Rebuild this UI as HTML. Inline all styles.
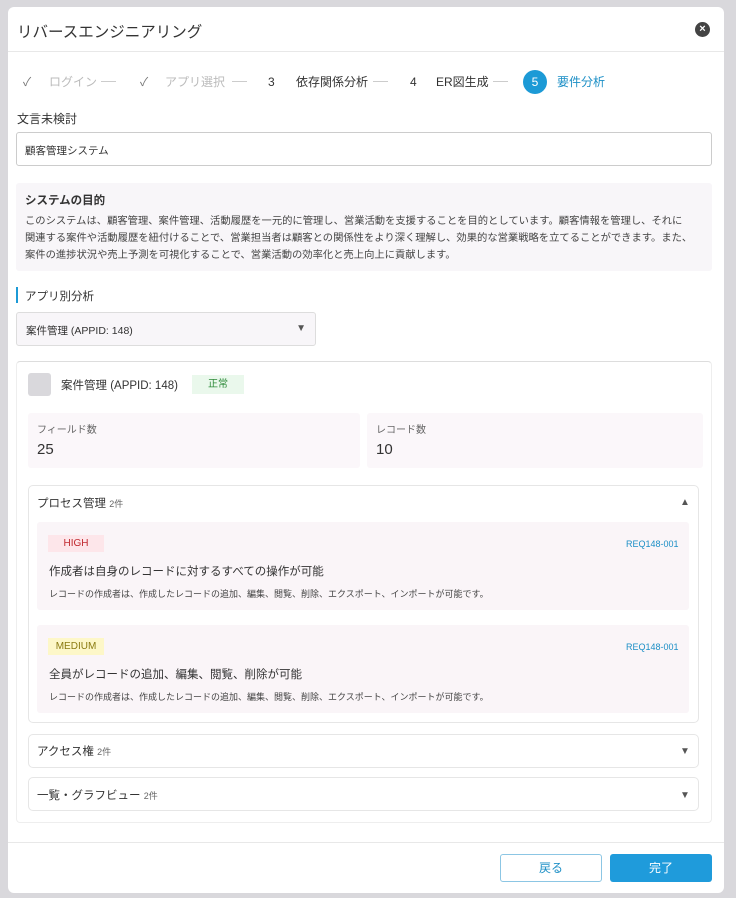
<!DOCTYPE html>
<html><head><meta charset="utf-8"><style>
*{box-sizing:border-box;margin:0;padding:0}
body{width:736px;height:898px;background:#d9d8dc;font-family:"Liberation Sans","Noto Sans CJK JP",sans-serif;color:#333;position:relative;overflow:hidden}
.a{position:absolute;white-space:nowrap}
.m{left:8px;top:7px;width:716px;height:886px;background:#fff;border-radius:6px}
.card{background:#fbf7fa;border-radius:3px}
.sec{border:1px solid #e6e6e6;border-radius:5px;background:#fff}
.tri{font-size:10px;color:#555}
.st{top:74px;font-size:12px;line-height:16px}
.ds{top:81px;width:15px;height:1px;background:#ccc}
</style></head><body>
<div class="a m"></div>
<div class="a" style="left:17px;top:20px;font-size:15.5px;color:#333">リバースエンジニアリング</div>
<div class="a" style="left:695px;top:22px;width:15px;height:15px;border-radius:50%;background:#444;color:#fff;font-size:11px;line-height:15px;text-align:center;font-weight:bold">×</div>
<div class="a" style="left:8px;top:51px;width:716px;height:1px;background:#e8e8e8"></div>
<div class="a st" style="left:23px;color:#777">✓</div>
<div class="a st" style="left:49px;color:#bbb">ログイン</div>
<div class="a ds" style="left:101px"></div>
<div class="a st" style="left:140px;color:#777">✓</div>
<div class="a st" style="left:165px;color:#bbb">アプリ選択</div>
<div class="a ds" style="left:232px"></div>
<div class="a st" style="left:268px">3</div>
<div class="a st" style="left:296px">依存関係分析</div>
<div class="a ds" style="left:373px"></div>
<div class="a st" style="left:410px">4</div>
<div class="a st" style="left:436px">ER図生成</div>
<div class="a ds" style="left:493px"></div>
<div class="a" style="left:523px;top:70px;width:24px;height:24px;border-radius:50%;background:#1c9ad6;color:#fff;font-size:12px;line-height:24px;text-align:center">5</div>
<div class="a st" style="left:557px;color:#1c8fc6">要件分析</div>
<div class="a" style="left:17px;top:110px;font-size:12px">文言未検討</div>
<div class="a" style="left:16px;top:132px;width:696px;height:34px;border:1px solid #ccc;border-radius:3px;font-size:10.5px;padding:10px 8px">顧客管理システム</div>
<div class="a card" style="left:16px;top:183px;width:696px;height:88px;background:#f8f6f9"></div>
<div class="a" style="left:25px;top:192px;font-size:11.5px;font-weight:bold">システムの目的</div>
<div class="a" style="left:25px;top:213px;width:680px;white-space:normal;font-size:10.3px;line-height:17px;color:#444">このシステムは、顧客管理、案件管理、活動履歴を一元的に管理し、営業活動を支援することを目的としています。顧客情報を管理し、それに<br>関連する案件や活動履歴を紐付けることで、営業担当者は顧客との関係性をより深く理解し、効果的な営業戦略を立てることができます。また、<br>案件の進捗状況や売上予測を可視化することで、営業活動の効率化と売上向上に貢献します。</div>
<div class="a" style="left:16px;top:287px;width:2px;height:16px;background:#1c9ad6"></div>
<div class="a" style="left:25px;top:288px;font-size:11.5px">アプリ別分析</div>
<div class="a" style="left:16px;top:312px;width:300px;height:34px;border:1px solid #ddd;border-radius:3px;background:#f8f6f9;font-size:10.5px;padding:10px 9px">案件管理 (APPID: 148)<span class="a tri" style="right:9px;top:10px">▼</span></div>
<div class="a" style="left:16px;top:361px;width:696px;height:462px;border:1px solid #eee;border-top-color:#ddd;border-radius:4px"></div>
<div class="a" style="left:28px;top:373px;width:23px;height:23px;background:#d9d8dc;border-radius:3px"></div>
<div class="a" style="left:61px;top:377px;font-size:11.5px">案件管理 (APPID: 148)</div>
<div class="a" style="left:192px;top:375px;width:52px;height:19px;background:#eaf8ec;color:#2e8b3a;font-size:10px;text-align:center;line-height:19px">正常</div>
<div class="a card" style="left:28px;top:413px;width:332px;height:55px"></div>
<div class="a card" style="left:367px;top:413px;width:336px;height:55px"></div>
<div class="a" style="left:37px;top:421px;font-size:10px;color:#666">フィールド数</div>
<div class="a" style="left:37px;top:441px;font-size:15px">25</div>
<div class="a" style="left:376px;top:421px;font-size:10px;color:#666">レコード数</div>
<div class="a" style="left:376px;top:441px;font-size:15px">10</div>
<div class="a sec" style="left:28px;top:485px;width:671px;height:238px"></div>
<div class="a" style="left:37px;top:495px;font-size:11.5px">プロセス管理 <span style="font-size:9px;color:#666">2件</span></div>
<div class="a tri" style="left:680px;top:497px">▲</div>
<div class="a card" style="left:37px;top:522px;width:652px;height:88px;background:#faf5f8"></div>
<div class="a" style="left:48px;top:535px;width:56px;height:17px;background:#fde6ea;color:#c0282e;font-size:10px;text-align:center;line-height:17px">HIGH</div>
<div class="a" style="left:626px;top:539px;font-size:9px;color:#1c8fc6">REQ148-001</div>
<div class="a" style="left:49px;top:563px;font-size:11.5px">作成者は自身のレコードに対するすべての操作が可能</div>
<div class="a" style="left:49px;top:587px;font-size:9px;color:#444">レコードの作成者は、作成したレコードの追加、編集、閲覧、削除、エクスポート、インポートが可能です。</div>
<div class="a card" style="left:37px;top:625px;width:652px;height:88px;background:#faf5f8"></div>
<div class="a" style="left:48px;top:638px;width:56px;height:17px;background:#fdf7c8;color:#8a7a10;font-size:10px;text-align:center;line-height:17px">MEDIUM</div>
<div class="a" style="left:626px;top:642px;font-size:9px;color:#1c8fc6">REQ148-001</div>
<div class="a" style="left:49px;top:666px;font-size:11.5px">全員がレコードの追加、編集、閲覧、削除が可能</div>
<div class="a" style="left:49px;top:690px;font-size:9px;color:#444">レコードの作成者は、作成したレコードの追加、編集、閲覧、削除、エクスポート、インポートが可能です。</div>
<div class="a sec" style="left:28px;top:734px;width:671px;height:34px"></div>
<div class="a" style="left:37px;top:743px;font-size:11.5px">アクセス権 <span style="font-size:9px;color:#666">2件</span></div>
<div class="a tri" style="left:680px;top:746px">▼</div>
<div class="a sec" style="left:28px;top:777px;width:671px;height:34px"></div>
<div class="a" style="left:37px;top:787px;font-size:11.5px">一覧・グラフビュー <span style="font-size:9px;color:#666">2件</span></div>
<div class="a tri" style="left:680px;top:790px">▼</div>
<div class="a" style="left:8px;top:842px;width:716px;height:1px;background:#e8e8e8"></div>
<div class="a" style="left:500px;top:854px;width:102px;height:28px;border:1px solid #8cc6e4;border-radius:3px;color:#1c8fc6;font-size:12px;text-align:center;line-height:26px">戻る</div>
<div class="a" style="left:610px;top:854px;width:102px;height:28px;background:#1f9bdb;border-radius:3px;color:#fff;font-size:12px;text-align:center;line-height:28px">完了</div>
</body></html>
